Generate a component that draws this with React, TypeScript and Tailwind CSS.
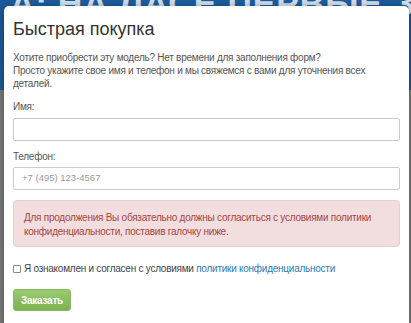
export default function App() {
  return (
    <div className="relative w-[411px] h-[323px] overflow-hidden bg-[#7d7d7d]" style={{ fontFamily: '"Liberation Sans", Arial, sans-serif' }}>
      <div className="h-[90px] bg-[#1d5c9c] overflow-hidden">
        <div className="-mt-[22px] pl-[10px] text-[34px] font-bold text-white/80 whitespace-nowrap tracking-wide">А: НА ЛАСЕ ПЕРВЫЕ ЗАДАЧИ</div>
      </div>
      <div className="absolute left-[4px] top-[6px] w-[405px] h-[340px] bg-white rounded-[5px] shadow-[0_2px_8px_rgba(0,0,0,0.4)] px-[9px] pt-[12px] tracking-[-0.25px]">
        <h4 className="text-[18px] leading-[22px] text-[#333] tracking-normal">Быстрая покупка</h4>
        <p className="mt-[11px] text-[10px] leading-[13px] text-[#555]">
          Хотите приобрести эту модель? Нет времени для заполнения форм?<br />
          Просто укажите свое имя и телефон и мы свяжемся с вами для уточнения всех деталей.
        </p>
        <div className="mt-[10px] text-[10px] leading-[13px] text-[#555]">Имя:</div>
        <div className="mt-[5px] h-[23px] border border-[#ccc] rounded-[2px]"></div>
        <div className="mt-[9px] text-[10px] leading-[13px] text-[#555]">Телефон:</div>
        <div className="mt-[4px] h-[23px] border border-[#ccc] rounded-[2px] flex items-center px-[8px] text-[9.5px] text-[#999] tracking-normal">+7 (495) 123-4567</div>
        <div className="mt-[10px] h-[47px] bg-[#f2dede] border border-[#ebccd1] rounded-[4px] px-[10px] pt-[10px] text-[10px] leading-[14px] text-[#a94442]">
          Для продолжения Вы обязательно должны согласиться с условиями политики конфиденциальности, поставив галочку ниже.
        </div>
        <div className="mt-[15px] flex items-center text-[10px] leading-[13px] text-[#444]">
          <span className="w-[8px] h-[8px] border border-[#888] rounded-[1px] bg-white mr-[3px]"></span>
          <span>Я ознакомлен и согласен с условиями <span className="text-[#2f7ab5]">политики конфиденциальности</span></span>
        </div>
        <div className="mt-[14px] w-[58px] h-[22px] rounded-[3px] border border-[#86b862] bg-gradient-to-b from-[#9acb73] to-[#7cb150] text-white text-[10px] font-bold flex items-center justify-center">Заказать</div>
      </div>
    </div>
  );
}
